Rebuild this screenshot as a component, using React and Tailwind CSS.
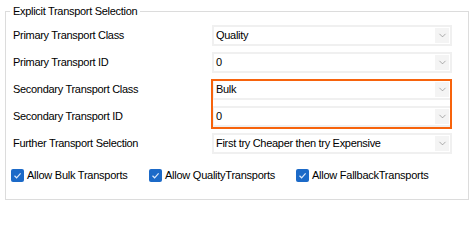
import { ChevronDown } from 'lucide-react'

const FONT = { fontFamily: '"Liberation Sans", Arial, sans-serif' }

function Combo({ value }) {
  return (
    <div className="flex h-[21px] w-[240px] items-center border-2 border-[#f0f0f0] bg-white">
      <span className="flex-1 pl-[2px] text-[11px] leading-none tracking-[-0.3px] text-black">{value}</span>
      <span className="mr-[1px] flex h-[15px] w-[14px] items-center justify-center bg-[#f4f4f4]">
        <ChevronDown size={11} strokeWidth={1.2} className="text-[#6e6e6e]" />
      </span>
    </div>
  )
}

function Row({ label, children }) {
  return (
    <div className="flex h-[21px] items-center">
      <span className="w-[199px] text-[11px] leading-none tracking-[-0.3px] text-black">{label}</span>
      {children}
    </div>
  )
}

function Check({ label, className = '' }) {
  return (
    <label className={`flex items-center ${className}`}>
      <span className="flex h-[13px] w-[13px] items-center justify-center rounded-[2px] bg-[#1c6ac8]">
        <svg width="9" height="9" viewBox="0 0 9 9" fill="none">
          <path d="M1.5 4.8 L3.6 6.8 L7.6 2.4" stroke="#dce9fb" strokeWidth="1.2" />
        </svg>
      </span>
      <span className="ml-[3px] text-[11px] leading-none tracking-[-0.25px] text-black">{label}</span>
    </label>
  )
}

export default function App() {
  return (
    <div className="relative h-[206px] w-[473px] bg-white" style={FONT}>
      <div className="absolute left-[5px] top-[11px] h-[189px] w-[464px] border border-[#dcdcdc]">
        <div className="flex flex-col gap-[6px] pl-[7px] pt-[13px]">
          <Row label="Primary Transport Class"><Combo value="Quality" /></Row>
          <Row label="Primary Transport ID"><Combo value="0" /></Row>
          <div className="relative flex flex-col gap-[6px]">
            <Row label="Secondary Transport Class"><Combo value="Bulk" /></Row>
            <Row label="Secondary Transport ID"><Combo value="0" /></Row>
            <div className="pointer-events-none absolute left-[198px] top-0 h-[50px] w-[241px] border-2 border-[#f7630c]" />
          </div>
          <Row label="Further Transport Selection"><Combo value="First try Cheaper then try Expensive" /></Row>
          <div className="mt-[9px] flex items-center">
            <Check label="Allow Bulk Transports" className="-ml-[2px] w-[138px]" />
            <Check label="Allow QualityTransports" className="w-[147px]" />
            <Check label="Allow FallbackTransports" />
          </div>
        </div>
      </div>
      <span className="absolute left-[10px] top-[4px] bg-white px-[3px] text-[11px] leading-[14px] tracking-[-0.3px] text-black">
        Explicit Transport Selection
      </span>
    </div>
  )
}
